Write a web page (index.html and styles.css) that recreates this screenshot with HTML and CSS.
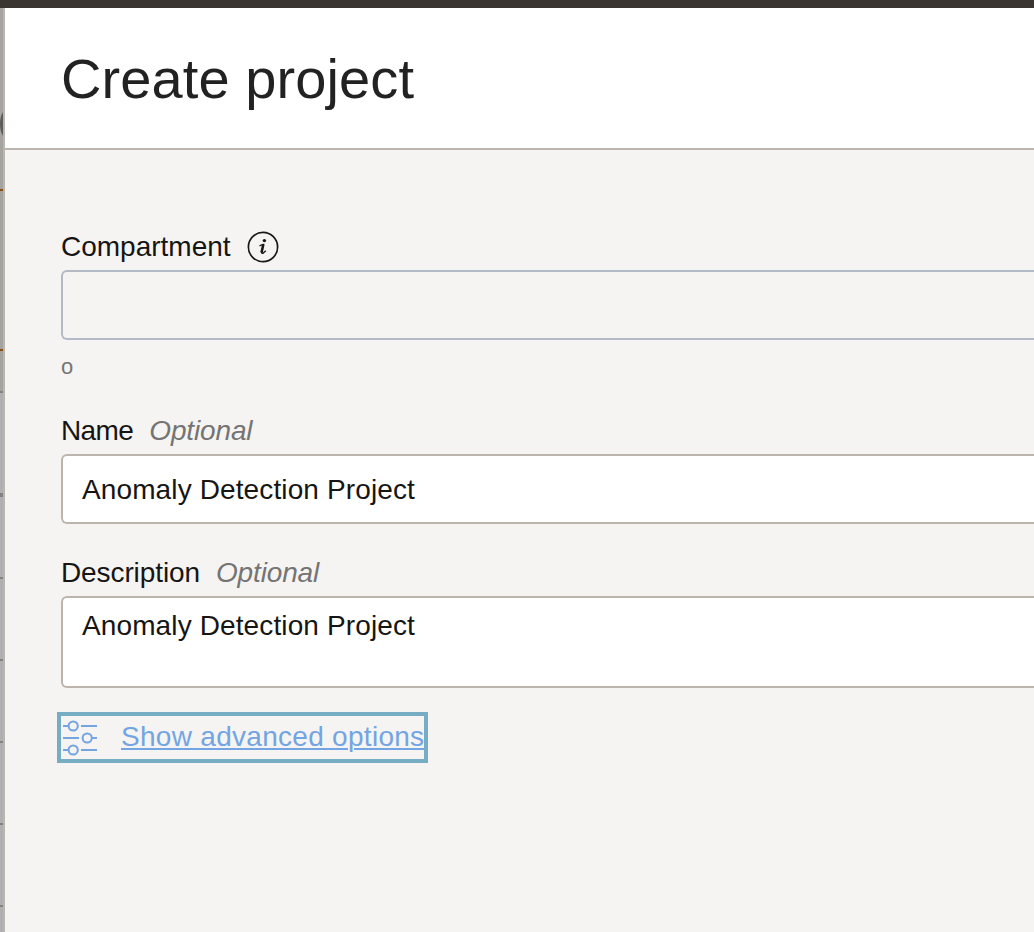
FILE: index.html
```html
<!DOCTYPE html>
<html lang="en">
<head>
<meta charset="utf-8">
<title>Create project</title>
<link rel="stylesheet" href="styles.css">
</head>
<body>
<div class="topbar"></div>
<div class="page">
  <div class="backdrop">
    <svg class="backdrop-art" width="3" height="924" viewBox="0 8 3 924" aria-hidden="true">
      <rect y="8" width="3" height="384" fill="#a5a4a1"/>
      <rect y="392" width="3" height="540" fill="#b0b0b2"/>
      <path d="M3 112Q0 117 0 124T3 136Z" fill="#5b5a5b"/>
      <path d="M0 190h3M0 350h3" stroke="#86500f" stroke-width="2"/>
      <path d="M0 392h3M0 578h3M0 660h3M0 742h3M0 824h3M0 906h3" stroke="#85817d" stroke-width="2"/>
      <path d="M0 495h3" stroke="#828282" stroke-width="4"/>
    </svg>
  </div>
  <main class="panel">
    <header class="panel-header"><h1 class="title">Create project</h1></header>
    <form class="form">
      <div class="label-row compartment-label">
        <span class="label">Compartment</span>
        <svg class="info" width="32" height="32" viewBox="0 0 32 32" aria-hidden="true">
          <circle cx="16" cy="16" r="14.6" fill="none" stroke="#1a1816" stroke-width="1.7"/>
          <circle cx="17.4" cy="9.6" r="1.7" fill="#1a1816"/>
          <path d="M12.5 15Q14.8 13.5 16.4 13.4L14.6 20.7Q14.4 23.2 16.6 21.8L18.8 19.8" fill="none" stroke="#1a1816" stroke-width="1.4"/>
          <path d="M16.4 13.3L14.5 21.6" stroke="#1a1816" stroke-width="2.5"/>
        </svg>
      </div>
      <div class="field field-select"></div>
      <div class="hint">o</div>
      <div class="label-row name-label"><span class="label label-name">Name</span><span class="optional">Optional</span></div>
      <div class="field field-input"><span class="value">Anomaly Detection Project</span></div>
      <div class="label-row description-label"><span class="label label-description">Description</span><span class="optional">Optional</span></div>
      <div class="field field-area"><span class="value">Anomaly Detection Project</span></div>
      <a class="advanced" href="#">
        <svg class="sliders" width="36" height="36" viewBox="0 0 36 36" aria-hidden="true">
          <g fill="none" stroke="#73a5e3" stroke-width="2">
            <path d="M1 6h5M19 6h16M1 18h16M30 18h5M1 30h5M19 30h16"/>
            <circle cx="11.2" cy="6" r="4.6"/>
            <circle cx="25.2" cy="18" r="4.6"/>
            <circle cx="11.2" cy="30" r="4.6"/>
          </g>
        </svg>
        <span class="advanced-text">Show advanced options</span>
      </a>
    </form>
  </main>
</div>
</body>
</html>
```
FILE: styles.css
```css
* { box-sizing: border-box; }
body {
  margin: 0;
  height: 932px;
  overflow: hidden;
  background: #f5f4f2;
  color: #161513;
  font: 28px/32px "Liberation Sans", Arial, sans-serif;
}
.topbar { height: 8px; background: #3b3531; }
.page { display: flex; height: 924px; }
.backdrop { width: 5px; flex: none; border-right: 2px solid #bab5af; }
.backdrop-art { display: block; }
.panel { flex: 1; min-width: 0; }
.panel-header {
  height: 142px;
  padding: 39px 0 0 56px;
  background: #fff;
  border-bottom: 2px solid #bbb5ae;
}
.title {
  margin: 0;
  color: #222;
  font-size: 56px;
  font-weight: 400;
  line-height: 64px;
  letter-spacing: 0.1px;
}
.form { padding: 81px 0 0 56px; }
.label-row { display: flex; height: 32px; white-space: nowrap; }
.label-name { letter-spacing: -0.6px; }
.label-description { letter-spacing: -0.1px; }
.info { flex: none; margin-left: 16px; }
.optional { margin-left: 16px; color: #757472; font-style: italic; letter-spacing: -0.15px; }
.field {
  border: 2px solid #bbb5ae;
  border-right: 0;
  border-radius: 6px 0 0 6px;
  background: #fff;
  padding-left: 19px;
}
.field-select { height: 70px; margin-top: 7px; border-color: #b2bbc5; background: #f5f4f2; }
.hint { height: 24px; margin-top: 15px; color: #777572; font-size: 22px; line-height: 24px; }
.name-label { margin-top: 36px; }
.field-input { height: 70px; margin-top: 7px; padding-top: 18px; }
.description-label { margin-top: 33px; }
.field-area { height: 92px; margin-top: 7px; padding-top: 12px; }
.value { display: block; letter-spacing: 0.12px; }
.advanced {
  display: flex;
  width: 371px;
  height: 51px;
  margin: 24px 0 0 -4px;
  border: 4px solid #77adc2;
  color: #73a5e3;
  text-decoration: none;
}
.sliders { margin: 4px 0 0 1px; flex: none; }
.advanced-text {
  margin: 5px 0 0 23px;
  white-space: nowrap;
  letter-spacing: 0.29px;
  text-decoration: underline;
  text-decoration-thickness: 2px;
  text-underline-offset: 2px;
}
```
